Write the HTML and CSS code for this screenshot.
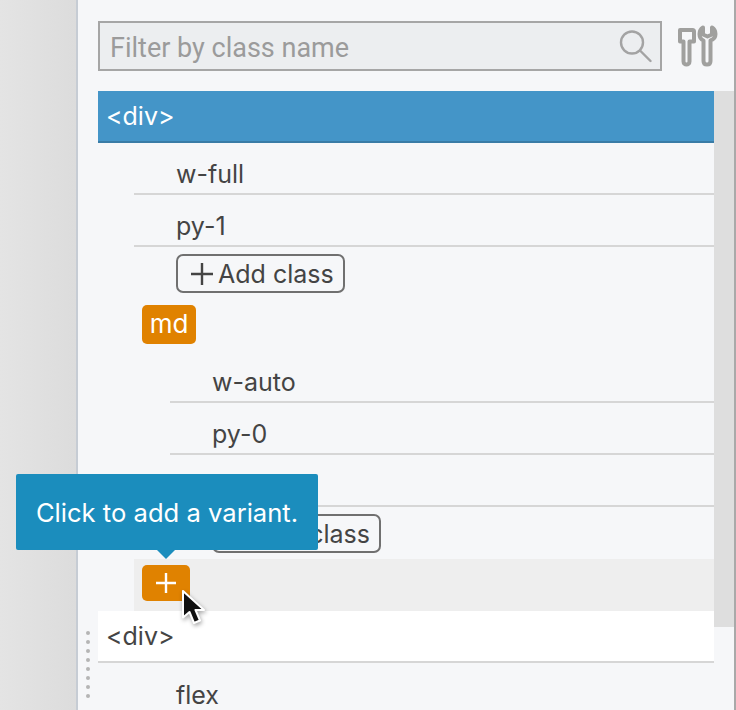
FILE: index.html
```html
<!DOCTYPE html>
<html lang="en">
<head>
    <meta charset="UTF-8">
    <meta name="viewport" content="width=device-width, initial-scale=1.0">
    <title>Class Inspector</title>
    <link rel="stylesheet" href="styles.css">
</head>
<body>
    <div class="gutter"></div>

    <main class="panel">
        <div class="toolbar">
            <div class="search">
                <span class="search-text">Filter by class name</span>
                <svg class="search-icon" width="34" height="34" viewBox="0 0 34 34" fill="none" stroke="#a3a3a3" stroke-width="2.4" stroke-linecap="round">
                    <circle cx="14" cy="13.5" r="11"/>
                    <path d="M22 21.5L32.5 32"/>
                </svg>
            </div>
            <svg class="tools-icon" width="42" height="42" viewBox="0 0 42 42" fill="none" stroke="#a0a09e" stroke-width="4" stroke-linejoin="round">
                <path d="M3 5H15.500C16.500 5 17 5.500 17 6.500V16.500H12.500V36.500C12.500 38.500 11 39.500 9.500 39.500C8 39.500 6.500 38.500 6.500 36.500V16.500H3Z"/>
                <path d="M26 2.500C23.500 4 22.500 6.500 22.500 9C22.500 12 24 14.500 26.500 15.500V36C26.500 38.500 28 39.500 30 39.500C32 39.500 33.500 38.500 33.500 36V15.500C36.500 14.500 38.500 12 38.500 9C38.500 6.500 37.500 4 35 2.500V9.500L30.500 11.500L26 9.500Z"/>
            </svg>
        </div>

        <div class="tree">
            <div class="rows">
                <div class="row row-selected">&lt;div&gt;</div>
                <div class="row item">w-full</div>
                <div class="row item">py-1</div>
                <div class="add-wrap"><button class="add-btn">
                    <svg class="add-plus" width="22" height="22" viewBox="0 0 22 22" stroke="#444" stroke-width="2.400"><path d="M11 0V22M0 11H22"/></svg>Add class
                </button></div>
                <div class="variant-wrap"><span class="badge">md</span></div>
                <div class="row item nested">w-auto</div>
                <div class="row item nested">py-0</div>
                <div class="row item nested"></div>
                <div class="add-wrap nested-add"><button class="add-btn add-btn-hidden">class</button></div>
                <div class="variant-row"><span class="badge badge-plus">
                    <svg width="20" height="20" viewBox="0 0 20 20" stroke="#fff" stroke-width="2.400"><path d="M10 0V20M0 10H20"/></svg>
                </span></div>
                <div class="row row-white">&lt;div&gt;</div>
                <div class="row item last">flex</div>
            </div>
            <div class="scrollbar"></div>
        </div>
    </main>

    <div class="handle">
        <i></i><i></i><i></i><i></i><i></i><i></i><i></i><i></i>
    </div>

    <div class="tooltip">Click to add a variant.</div>

    <svg class="cursor" width="28" height="40" viewBox="0 0 28 40">
        <path d="M3 2V28.500L9.500 23L14 34L20 31.500L15.500 21H24Z" fill="#111" stroke="#fff" stroke-width="2" stroke-linejoin="round"/>
    </svg>
</body>
</html>
```

FILE: styles.css
```css
html, body {
    margin: 0;
    height: 710px;
    overflow: hidden;
}
body {
    display: flex;
    font-family: Inter, "Liberation Sans", sans-serif;
    font-size: 25px;
    color: #444;
    background: #f6f7f9;
}
.gutter {
    width: 76px;
    background: linear-gradient(to right, #e4e4e4, #dcdcdc);
    border-right: 2px solid #c6ccd4;
    flex-shrink: 0;
}
.panel {
    width: 636px;
    padding: 21px 0 0 20px;
    border-right: 2px solid #a9a9a9;
    border-top: 1px solid #d0d2d6;
    margin-top: -1px;
}
.toolbar {
    display: flex;
    align-items: center;
    height: 50px;
}
.search {
    width: 564px;
    height: 50px;
    box-sizing: border-box;
    border: 2px solid #a6a6a6;
    background: #eceef0;
    display: flex;
    align-items: center;
    justify-content: space-between;
    padding: 4px 8px 0 10px;
}
.search-text {
    color: #9b9b9b;
    font-family: Roboto, "Liberation Sans", sans-serif;
    font-size: 27px;
}
.search-icon {
    margin-top: -4px;
}
.tools-icon {
    margin-left: 15px;
    flex-shrink: 0;
}
.tree {
    display: flex;
    margin-top: 20px;
}
.rows {
    width: 616px;
    flex-shrink: 0;
}
.scrollbar {
    width: 20px;
    height: 536px;
    background: #dedede;
}
.row {
    height: 52px;
    box-sizing: border-box;
    border-bottom: 2px solid #d6d6d6;
    display: flex;
    align-items: center;
    padding-left: 8px;
}
.row-selected {
    background: #4495c8;
    border-bottom-color: #3a7ca6;
    color: #fff;
}
.row-white {
    background: #fff;
}
.item {
    margin-left: 36px;
    padding: 12px 0 0 42px;
}
.item.nested {
    margin-left: 72px;
}
.add-wrap {
    height: 58px;
    padding: 7px 0 0 78px;
    box-sizing: border-box;
}
.nested-add {
    height: 52px;
    padding-left: 114px;
}
.add-btn {
    width: 169px;
    height: 39px;
    box-sizing: border-box;
    padding: 0 0 0 13px;
    border: 2px solid #707070;
    border-radius: 7px;
    background: none;
    font: inherit;
    color: #444;
    display: flex;
    align-items: center;
}
.add-btn-hidden {
    padding: 0 9px 0 0;
    justify-content: flex-end;
}
.add-plus {
    margin-right: 5px;
}
.variant-wrap {
    height: 46px;
    padding-left: 44px;
    box-sizing: border-box;
}
.badge {
    display: inline-flex;
    align-items: center;
    justify-content: center;
    width: 54px;
    height: 39px;
    padding-bottom: 2px;
    box-sizing: border-box;
    border-radius: 5px;
    background: #e08200;
    color: #fff;
    font-size: 26px;
}
.variant-row {
    height: 52px;
    margin-left: 36px;
    padding: 6px 0 0 8px;
    box-sizing: border-box;
    background: #eeeeee;
}
.badge-plus {
    width: 48px;
    height: 36px;
    padding-bottom: 0;
}
.last {
    border-bottom: none;
}
.handle {
    position: absolute;
    left: 86px;
    top: 631px;
    display: flex;
    flex-direction: column;
    gap: 5px;
}
.handle i {
    width: 4px;
    height: 4px;
    border-radius: 50%;
    background: #b5b5b5;
}
.tooltip {
    position: absolute;
    left: 16px;
    top: 474px;
    width: 302px;
    height: 76px;
    box-sizing: border-box;
    padding-top: 24px;
    text-align: center;
    font-size: 25.6px;
    line-height: 29px;
    border-radius: 2px;
    background: #1b8dbd;
    color: #fff;
}
.tooltip::after {
    content: "";
    position: absolute;
    left: 141px;
    bottom: -9px;
    border-left: 9px solid transparent;
    border-right: 9px solid transparent;
    border-top: 9px solid #1b8dbd;
}
.cursor {
    position: absolute;
    left: 180px;
    top: 589px;
    filter: drop-shadow(1px 2px 2px rgba(0, 0, 0, 0.35));
}
```
